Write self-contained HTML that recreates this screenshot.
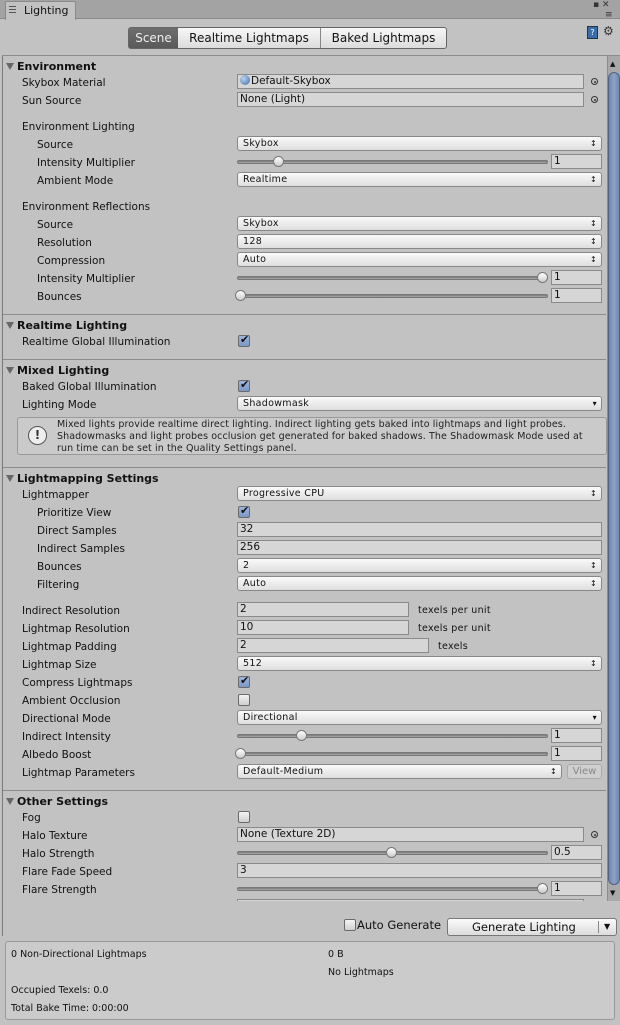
<!DOCTYPE html>
<html><head><meta charset="utf-8"><style>
*{margin:0;padding:0;box-sizing:border-box}
body{width:620px;height:1025px;background:#c2c2c2;font-family:"DejaVu Sans","Liberation Sans",sans-serif;font-size:10.5px;color:#111;position:relative;overflow:hidden}
.a{position:absolute}
.tabbar{left:0;top:0;width:620px;height:19px;background:#a3a3a3;border-bottom:1px solid #8a8a8a}
.tab{left:5px;top:1px;width:71px;height:19px;background:#c2c2c2;border:1px solid #8a8a8a;border-bottom:none;border-radius:2px 2px 0 0;padding:2px 0 0 18px;font-size:11px}
.lbl{height:18px;line-height:18px;white-space:nowrap;margin-top:1px}
.hd{font-weight:bold;font-size:11px;height:18px;line-height:18px;left:17px;margin-top:1px}
.tri{left:6px;width:0;height:0;border-left:4px solid transparent;border-right:4px solid transparent;border-top:7px solid #666}
.sep{left:3px;width:603px;height:1px;background:#8c8c8c}
.dd{height:15px;border:1px solid #888;border-radius:3px;background:linear-gradient(#fafafa,#dedede);font-size:9.5px;line-height:13px;padding-left:5px;letter-spacing:.3px}
.dd:after{content:"\2195";position:absolute;right:4px;top:0;font-size:8px}
.dd.s:after{content:"\25BE"}
.tf{height:15px;border:1px solid #8a8a8a;background:#d6d6d6;line-height:13px;padding-left:2px;font-size:10.5px}
.of{height:15px;border:1px solid #8a8a8a;background:#d6d6d6;line-height:13px;padding-left:2px}
.pk{width:7px;height:7px;border:1px solid #333;border-radius:50%}
.pk:after{content:"";position:absolute;left:1.5px;top:1.5px;width:2px;height:2px;background:#333;border-radius:50%}
.trk{height:4px;border-radius:2px;background:linear-gradient(#777,#aaa);border:1px solid #777}
.th{width:11px;height:11px;border-radius:50%;border:1px solid #777;background:linear-gradient(#fff,#ccc)}
.cb{width:12px;height:12px;border:1px solid #6a6a6a;border-radius:2px;background:linear-gradient(#f4f4f4,#cfcfcf)}
.cb.c{background:linear-gradient(#9eb6dd,#7b97c6)}
.cb.c:after{content:"\2714";position:absolute;left:1px;top:-3px;font-size:11px;color:#111}
.tx{font-size:9.5px;letter-spacing:.3px}
</style></head><body>
<div class="a tabbar"></div>
<div class="a tab">Lighting</div>
<div class="a" style="left:9px;top:6px;width:7px;height:1px;background:#555;box-shadow:0 3px #555,0 6px #555"></div>
<div class="a" style="left:593px;top:0;font-size:9px;color:#333">▪ ✕</div>
<div class="a" style="left:605px;top:10px;font-size:9px;color:#333">≡</div>

<div class="a" style="left:128px;top:27px;width:319px;height:22px;border:1px solid #666;border-radius:3px;background:linear-gradient(#f7f7f7,#dcdcdc);font-size:12px;line-height:20px;display:flex">
<div style="width:49px;background:linear-gradient(#6e6e6e,#5a5a5a);color:#eee;text-align:center">Scene</div>
<div style="width:143px;text-align:center;border-right:1px solid #888">Realtime Lightmaps</div>
<div style="flex:1;text-align:center">Baked Lightmaps</div></div>
<div class="a" style="left:587px;top:26px;width:11px;height:13px;background:#3b6ea8;border:1px solid #234;color:#fff;font-size:8px;text-align:center;line-height:11px">?</div>
<div class="a" style="left:603px;top:24px;font-size:12px;color:#333">⚙</div>
<div class="a" style="left:2px;top:55px;width:618px;height:1px;background:#8c8c8c"></div>
<div class="a" style="left:2px;top:56px;width:1px;height:880px;background:#7a7a7a"></div>

<div class="a" style="left:607px;top:56px;width:13px;height:845px;background:#a9a9a9;border-left:1px solid #8c8c8c"></div>
<div class="a" style="left:608px;top:72px;width:12px;height:813px;border-radius:6px;background:linear-gradient(90deg,#6f86ad,#8ea2c4,#6f86ad);border:1px solid #4f6388"></div>
<div class="a" style="left:610px;top:60px;font-size:7px">▲</div>
<div class="a" style="left:610px;top:889px;font-size:7px">▼</div>

<div class="a" style="left:3px;top:56px;width:604px;height:845px;overflow:hidden">
<div style="position:absolute;left:-3px;top:-56px;width:620px;height:1000px">

<div class="a tri" style="top:63px"></div><div class="a hd" style="top:57px">Environment</div>
<div class="a lbl" style="left:22px;top:73px">Skybox Material</div>
<div class="a of" style="left:237px;top:74px;width:347px"><span style="display:inline-block;width:10px;height:10px;border-radius:50%;background:radial-gradient(circle at 35% 35%,#bcd3f0,#3d6aa5);vertical-align:-1px;margin-right:1px"></span>Default-Skybox</div>
<div class="a pk" style="left:591px;top:78px"></div>
<div class="a lbl" style="left:22px;top:91px">Sun Source</div>
<div class="a of" style="left:237px;top:92px;width:347px">None (Light)</div>
<div class="a pk" style="left:591px;top:96px"></div>

<div class="a lbl" style="left:22px;top:117px">Environment Lighting</div>
<div class="a lbl" style="left:37px;top:135px">Source</div><div class="a dd" style="left:237px;top:136px;width:365px">Skybox</div>
<div class="a lbl" style="left:37px;top:153px">Intensity Multiplier</div>
<div class="a trk" style="left:237px;top:160px;width:311px"></div><div class="a th" style="left:273px;top:156px"></div>
<div class="a tf" style="left:551px;top:154px;width:51px">1</div>
<div class="a lbl" style="left:37px;top:171px">Ambient Mode</div><div class="a dd" style="left:237px;top:172px;width:365px">Realtime</div>

<div class="a lbl" style="left:22px;top:197px">Environment Reflections</div>
<div class="a lbl" style="left:37px;top:215px">Source</div><div class="a dd" style="left:237px;top:216px;width:365px">Skybox</div>
<div class="a lbl" style="left:37px;top:233px">Resolution</div><div class="a dd" style="left:237px;top:234px;width:365px">128</div>
<div class="a lbl" style="left:37px;top:251px">Compression</div><div class="a dd" style="left:237px;top:252px;width:365px">Auto</div>
<div class="a lbl" style="left:37px;top:269px">Intensity Multiplier</div>
<div class="a trk" style="left:237px;top:276px;width:311px"></div><div class="a th" style="left:537px;top:272px"></div>
<div class="a tf" style="left:551px;top:270px;width:51px">1</div>
<div class="a lbl" style="left:37px;top:287px">Bounces</div>
<div class="a trk" style="left:237px;top:294px;width:311px"></div><div class="a th" style="left:235px;top:290px"></div>
<div class="a tf" style="left:551px;top:288px;width:51px">1</div>

<div class="a sep" style="top:314px"></div>
<div class="a tri" style="top:322px"></div><div class="a hd" style="top:316px">Realtime Lighting</div>
<div class="a lbl" style="left:22px;top:332px">Realtime Global Illumination</div><div class="a cb c" style="left:238px;top:335px"></div>

<div class="a sep" style="top:359px"></div>
<div class="a tri" style="top:367px"></div><div class="a hd" style="top:361px">Mixed Lighting</div>
<div class="a lbl" style="left:22px;top:377px">Baked Global Illumination</div><div class="a cb c" style="left:238px;top:380px"></div>
<div class="a lbl" style="left:22px;top:395px">Lighting Mode</div><div class="a dd s" style="left:237px;top:396px;width:365px">Shadowmask</div>
<div class="a" style="left:17px;top:417px;width:590px;height:38px;border:1px solid #999;border-radius:3px;background:#cacaca"></div>
<div class="a" style="left:28px;top:426px;width:19px;height:19px;border-radius:50%;border:1.5px solid #555;background:#eee;text-align:center;font-weight:bold;font-size:12px;line-height:16px;color:#333">!</div>
<div class="a" style="left:57px;top:419px;font-size:9.5px;line-height:12px;letter-spacing:.1px;color:#222">Mixed lights provide realtime direct lighting. Indirect lighting gets baked into lightmaps and light probes.<br>Shadowmasks and light probes occlusion get generated for baked shadows. The Shadowmask Mode used at<br>run time can be set in the Quality Settings panel.</div>

<div class="a sep" style="top:467px"></div>
<div class="a tri" style="top:475px"></div><div class="a hd" style="top:469px">Lightmapping Settings</div>
<div class="a lbl" style="left:22px;top:485px">Lightmapper</div><div class="a dd" style="left:237px;top:486px;width:365px">Progressive CPU</div>
<div class="a lbl" style="left:37px;top:503px">Prioritize View</div><div class="a cb c" style="left:238px;top:506px"></div>
<div class="a lbl" style="left:37px;top:521px">Direct Samples</div><div class="a tf" style="left:237px;top:522px;width:365px">32</div>
<div class="a lbl" style="left:37px;top:539px">Indirect Samples</div><div class="a tf" style="left:237px;top:540px;width:365px">256</div>
<div class="a lbl" style="left:37px;top:557px">Bounces</div><div class="a dd" style="left:237px;top:558px;width:365px">2</div>
<div class="a lbl" style="left:37px;top:575px">Filtering</div><div class="a dd" style="left:237px;top:576px;width:365px">Auto</div>

<div class="a lbl" style="left:22px;top:601px">Indirect Resolution</div><div class="a tf" style="left:237px;top:602px;width:172px">2</div><div class="a lbl tx" style="left:418px;top:601px">texels per unit</div>
<div class="a lbl" style="left:22px;top:619px">Lightmap Resolution</div><div class="a tf" style="left:237px;top:620px;width:172px">10</div><div class="a lbl tx" style="left:418px;top:619px">texels per unit</div>
<div class="a lbl" style="left:22px;top:637px">Lightmap Padding</div><div class="a tf" style="left:237px;top:638px;width:192px">2</div><div class="a lbl tx" style="left:438px;top:637px">texels</div>
<div class="a lbl" style="left:22px;top:655px">Lightmap Size</div><div class="a dd" style="left:237px;top:656px;width:365px">512</div>
<div class="a lbl" style="left:22px;top:673px">Compress Lightmaps</div><div class="a cb c" style="left:238px;top:676px"></div>
<div class="a lbl" style="left:22px;top:691px">Ambient Occlusion</div><div class="a cb" style="left:238px;top:694px"></div>
<div class="a lbl" style="left:22px;top:709px">Directional Mode</div><div class="a dd s" style="left:237px;top:710px;width:365px">Directional</div>
<div class="a lbl" style="left:22px;top:727px">Indirect Intensity</div>
<div class="a trk" style="left:237px;top:734px;width:311px"></div><div class="a th" style="left:296px;top:730px"></div>
<div class="a tf" style="left:551px;top:728px;width:51px">1</div>
<div class="a lbl" style="left:22px;top:745px">Albedo Boost</div>
<div class="a trk" style="left:237px;top:752px;width:311px"></div><div class="a th" style="left:235px;top:748px"></div>
<div class="a tf" style="left:551px;top:746px;width:51px">1</div>
<div class="a lbl" style="left:22px;top:763px">Lightmap Parameters</div><div class="a dd" style="left:237px;top:764px;width:325px">Default-Medium</div>
<div class="a" style="left:567px;top:764px;width:35px;height:15px;border:1px solid #aaa;border-radius:3px;background:#cfcfcf;color:#888;font-size:10px;text-align:center;line-height:13px">View</div>

<div class="a sep" style="top:790px"></div>
<div class="a tri" style="top:798px"></div><div class="a hd" style="top:792px">Other Settings</div>
<div class="a lbl" style="left:22px;top:808px">Fog</div><div class="a cb" style="left:238px;top:811px"></div>
<div class="a lbl" style="left:22px;top:826px">Halo Texture</div><div class="a of" style="left:237px;top:827px;width:347px">None (Texture 2D)</div><div class="a pk" style="left:591px;top:831px"></div>
<div class="a lbl" style="left:22px;top:844px">Halo Strength</div>
<div class="a trk" style="left:237px;top:851px;width:311px"></div><div class="a th" style="left:386px;top:847px"></div>
<div class="a tf" style="left:551px;top:845px;width:51px">0.5</div>
<div class="a lbl" style="left:22px;top:862px">Flare Fade Speed</div><div class="a tf" style="left:237px;top:863px;width:365px">3</div>
<div class="a lbl" style="left:22px;top:880px">Flare Strength</div>
<div class="a trk" style="left:237px;top:887px;width:311px"></div><div class="a th" style="left:537px;top:883px"></div>
<div class="a tf" style="left:551px;top:881px;width:51px">1</div>
<div class="a lbl" style="left:22px;top:898px">Spot Cookie</div><div class="a of" style="left:237px;top:899px;width:347px">Soft</div>
</div></div>

<div class="a cb" style="left:344px;top:919px"></div>
<div class="a" style="left:357px;top:918px;font-size:11.5px">Auto Generate</div>
<div class="a" style="left:447px;top:918px;width:170px;height:18px;border:1px solid #777;border-radius:3px;background:linear-gradient(#fbfbfb,#dcdcdc);font-size:11.5px;line-height:16px"><span style="position:absolute;left:24px">Generate Lighting</span><span style="position:absolute;left:150px;top:2px;width:1px;height:12px;background:#888"></span><span style="position:absolute;left:156px;font-size:8px">▼</span></div>
<div class="a" style="left:5px;top:941px;width:610px;height:79px;border:1px solid #999;border-radius:3px;background:#cbcbcb;font-size:9.5px">
<div class="a" style="left:5px;top:7px">0 Non-Directional Lightmaps</div>
<div class="a" style="left:322px;top:7px">0 B</div>
<div class="a" style="left:322px;top:25px">No Lightmaps</div>
<div class="a" style="left:5px;top:43px">Occupied Texels: 0.0</div>
<div class="a" style="left:5px;top:61px">Total Bake Time: 0:00:00</div>
</div>
</body></html>
